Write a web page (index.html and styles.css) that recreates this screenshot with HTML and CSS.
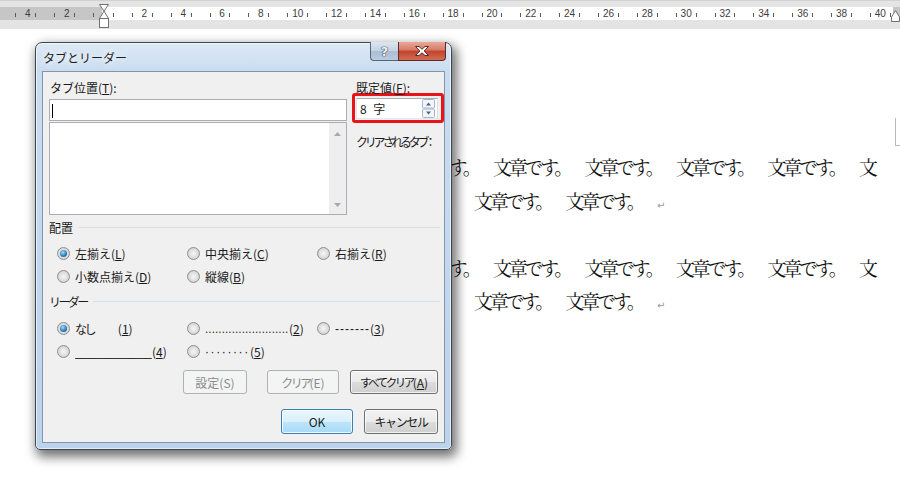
FILE: index.html
```html
<!DOCTYPE html>
<html lang="ja">

<head>
    <meta charset="UTF-8">
    <meta name="viewport" content="width=device-width, initial-scale=1.0">
    <title>タブとリーダー</title>
    <link rel="stylesheet" href="styles.css">
</head>

<body>

    <div class="ruler">
        <div class="ruler-band">
            <div class="scale">
                <div class="cell"><i></i><span class="d1">4</span><i></i></div>
                <div class="cell"><i></i><span class="d1">2</span><i></i></div>
                <div class="cell"><i></i><span></span><i></i></div>
                <div class="cell"><i></i><span class="d1">2</span><i></i></div>
                <div class="cell"><i></i><span class="d1">4</span><i></i></div>
                <div class="cell"><i></i><span class="d1">6</span><i></i></div>
                <div class="cell"><i></i><span class="d1">8</span><i></i></div>
                <div class="cell"><i></i><span>10</span><i></i></div>
                <div class="cell"><i></i><span>12</span><i></i></div>
                <div class="cell"><i></i><span>14</span><i></i></div>
                <div class="cell"><i></i><span>16</span><i></i></div>
                <div class="cell"><i></i><span>18</span><i></i></div>
                <div class="cell"><i></i><span>20</span><i></i></div>
                <div class="cell"><i></i><span>22</span><i></i></div>
                <div class="cell"><i></i><span>24</span><i></i></div>
                <div class="cell"><i></i><span>26</span><i></i></div>
                <div class="cell"><i></i><span>28</span><i></i></div>
                <div class="cell"><i></i><span>30</span><i></i></div>
                <div class="cell"><i></i><span>32</span><i></i></div>
                <div class="cell"><i></i><span>34</span><i></i></div>
                <div class="cell"><i></i><span>36</span><i></i></div>
                <div class="cell"><i></i><span>38</span><i></i></div>
                <div class="cell"><i></i><span>40</span><i></i></div>
            </div>
        </div>
        <!-- indent markers -->
        <svg class="indent-left" width="11" height="25" viewBox="0 0 11 25">
            <polygon points="0.5,0.5 9.5,0.5 5,7" fill="#fff" stroke="#707070" />
            <polygon points="5,7 9.5,14.5 0.5,14.5" fill="#fff" stroke="#707070" />
            <rect x="0.5" y="14.5" width="9" height="9" fill="#fff" stroke="#707070" />
        </svg>
        <svg class="indent-right" width="9" height="12" viewBox="0 0 9 12">
            <polygon points="4.5,0.5 8.5,7 8.5,11.5 0.5,11.5 0.5,7" fill="#fff" stroke="#707070" />
        </svg>
    </div>

    <div class="doc">
        <div class="line first">文章です<span class="kt">。</span>文章です<span class="kt">。</span>文章です<span class="kt">。</span>文章です<span class="kt">。</span>文章です<span class="kt">。</span>文章です<span class="kt">。</span>文章です<span class="kt">。</span>文章です<span class="kt">。</span>文</div>
        <div class="line">文章です<span class="kt">。</span>文章です<span class="kt">。</span>文章です<span class="kt">。</span>文章です<span class="kt">。</span>文章です<span class="kt">。</span>文章です<span class="kt">。</span><span class="pmark">↵</span></div>
        <div class="line"><span class="pmark">↵</span></div>
        <div class="line first">文章です<span class="kt">。</span>文章です<span class="kt">。</span>文章です<span class="kt">。</span>文章です<span class="kt">。</span>文章です<span class="kt">。</span>文章です<span class="kt">。</span>文章です<span class="kt">。</span>文章です<span class="kt">。</span>文</div>
        <div class="line">文章です<span class="kt">。</span>文章です<span class="kt">。</span>文章です<span class="kt">。</span>文章です<span class="kt">。</span>文章です<span class="kt">。</span>文章です<span class="kt">。</span><span class="pmark">↵</span></div>
        <div class="crop-mark"></div>
    </div>

    <div class="dialog">
        <div class="titlebar">
            <span class="title">タブとリーダー</span>
        </div>
        <div class="caption-buttons">
            <div class="cap help">?</div>
            <div class="cap close">
                <svg width="14" height="10" viewBox="0 0 14 10">
                    <polygon points="0.5,0.5 4,0.5 7,3.2 10,0.5 13.5,0.5 9.2,5 13.5,9.5 10,9.5 7,6.8 4,9.5 0.5,9.5 4.8,5" fill="#fff" stroke="#5a2a24" />
                </svg>
            </div>
        </div>

        <div class="client">
            <div class="top">
                <div class="col-left">
                    <div class="label">タブ位置(<u>T</u>):</div>
                    <div class="input"><span class="caret"></span></div>
                    <div class="listbox">
                        <div class="scroll">
                            <svg width="7" height="4" viewBox="0 0 7 4"><polygon points="0,4 7,4 3.5,0" fill="#a9a9a9" /></svg>
                            <svg width="7" height="4" viewBox="0 0 7 4"><polygon points="0,0 7,0 3.5,4" fill="#a9a9a9" /></svg>
                        </div>
                    </div>
                </div>
                <div class="col-right">
                    <div class="label">既定値(<u>F</u>):</div>
                    <div class="highlight">
                        <div class="spin">
                            <span class="spin-value">8 字</span>
                            <svg width="13" height="19" viewBox="0 0 13 19">
                                <rect x="0.5" y="0.5" width="12" height="8.5" rx="1" fill="#f2f5f9" stroke="#a7b4c6" />
                                <rect x="0.5" y="10" width="12" height="8.5" rx="1" fill="#f2f5f9" stroke="#a7b4c6" />
                                <polygon points="4,6.5 9,6.5 6.5,3.5" fill="#4c607f" />
                                <polygon points="4,12.5 9,12.5 6.5,15.5" fill="#4c607f" />
                            </svg>
                        </div>
                    </div>
                    <div class="label clear-label"><span class="squeeze">クリアされるタブ</span><span class="colon">：</span></div>
                </div>
            </div>

            <div class="group-head"><span>配置</span>
                <div class="rule"></div>
            </div>
            <div class="options">
                <div class="opt"><span class="radio checked"></span>左揃え(<u>L</u>)</div>
                <div class="opt"><span class="radio"></span>中央揃え(<u>C</u>)</div>
                <div class="opt"><span class="radio"></span>右揃え(<u>R</u>)</div>
                <div class="opt"><span class="radio"></span>小数点揃え(<u>D</u>)</div>
                <div class="opt"><span class="radio"></span>縦線(<u>B</u>)</div>
            </div>

            <div class="group-head"><span class="tight">リーダー</span>
                <div class="rule"></div>
            </div>
            <div class="options leaders">
                <div class="opt"><span class="radio checked"></span><span class="tight">なし</span><span class="num">(<u>1</u>)</span></div>
                <div class="opt"><span class="radio"></span><span class="fill dots">.........................</span>(<u>2</u>)</div>
                <div class="opt"><span class="radio"></span><span class="fill dashes">-------</span>(<u>3</u>)</div>
                <div class="opt"><span class="radio"></span><span class="fill under">____________</span>(<u>4</u>)</div>
                <div class="opt"><span class="radio"></span><span class="fill mids">········</span>(<u>5</u>)</div>
            </div>

            <div class="buttons row1">
                <div class="btn disabled set">設定(S)</div>
                <div class="btn disabled clr"><span class="tight">クリア</span>(E)</div>
                <div class="btn all"><span class="tighter">すべてクリア</span>(<u>A</u>)</div>
            </div>
            <div class="buttons row2">
                <div class="btn default ok">OK</div>
                <div class="btn cancel"><span class="kana">キャンセル</span></div>
            </div>
        </div>
    </div>

</body>

</html>
```

FILE: styles.css
```css
* {
    margin: 0;
    padding: 0;
}

body {
    width: 900px;
    height: 483px;
    overflow: hidden;
    position: relative;
    background: #fff;
    font-family: "Noto Sans CJK JP", "Liberation Sans", sans-serif;
}

/* ruler */

.ruler {
    height: 29px;
    box-sizing: border-box;
    padding-top: 6px;
    background: #e4e4e4;
    border-top: 1px solid #d2d2d2;
    position: relative;
}

.ruler-band {
    height: 13px;
    background: linear-gradient(to right, #c6c6c6 0 102px, #fff 102px 893px, #c6c6c6 893px);
}

.scale {
    display: flex;
    margin-left: 6.4px;
    height: 13px;
}

.cell {
    width: 38.85px;
    flex: none;
    box-sizing: border-box;
    padding: 0 9px;
    display: flex;
    justify-content: space-between;
    align-items: center;
    font-family: "Liberation Sans", sans-serif;
    font-size: 10px;
    color: #3c3c3c;
    line-height: 13px;
}

.cell i {
    width: 1px;
    height: 4px;
    background: #5a5a5a;
    margin-top: 2px;
}

.cell .d1 {
    padding-left: 4px;
}

.indent-left {
    position: absolute;
    left: 99px;
    top: 3px;
}

.indent-right {
    position: absolute;
    left: 891px;
    top: 9px;
}

/* document */

.doc {
    padding-top: 121px;
    font-family: "Noto Serif CJK JP", "IPAMincho", "Noto Sans CJK JP", serif;
    font-size: 19px;
    letter-spacing: -3.3px;
    line-height: 33.5px;
    color: #111;
    white-space: nowrap;
    position: relative;
}

.line {
    height: 33.5px;
    padding-left: 108px;
}

.line.first {
    padding-left: 127px;
}

.kt {
    margin-right: 14.5px;
}

.pmark {
    font-family: "DejaVu Sans", sans-serif;
    font-size: 10px;
    color: #9a9a9a;
    letter-spacing: 0;
    margin-left: 0;
}

.crop-mark {
    position: absolute;
    left: 895px;
    top: 89px;
    width: 6px;
    height: 27px;
    border-left: 1px solid #b8b8b8;
    border-bottom: 1px solid #b8b8b8;
}

/* dialog window */

.dialog {
    position: absolute;
    left: 35px;
    top: 42px;
    width: 417px;
    height: 408px;
    box-sizing: border-box;
    border: 1px solid #3d4753;
    border-radius: 7px 7px 5px 5px;
    padding: 0 6px 6px;
    background: linear-gradient(#dce9f6, #c9dcf0 30px, #bcd3ec);
    box-shadow: 3px 5px 11px 2px rgba(0, 0, 0, 0.55), inset 0 0 0 1px rgba(255, 255, 255, 0.6);
    display: flex;
    flex-direction: column;
    font-size: 12px;
    color: #1a1a1a;
}

.titlebar {
    height: 28px;
    display: flex;
    align-items: center;
    padding-left: 1px;
}

.title {
    font-size: 12px;
    color: #1e1e1e;
    text-shadow: 0 0 6px #fff, 0 0 10px #fff;
}

.caption-buttons {
    position: absolute;
    right: 5px;
    top: -1px;
    display: flex;
}

.cap {
    height: 19px;
    box-sizing: border-box;
    border: 1px solid #56657a;
    border-top: none;
    display: flex;
    justify-content: center;
    align-items: center;
}

.help {
    width: 28px;
    border-radius: 0 0 0 4px;
    border-right: none;
    background: linear-gradient(#dde6f1, #c3d1e2 50%, #aabdd3 50%, #bccbde);
    font-family: "DejaVu Sans", sans-serif;
    font-weight: bold;
    font-size: 13px;
    color: #eef1f5;
    text-shadow: 0 0 1px #37475c, 0 0 1px #37475c, 0 0 1px #37475c;
}

.close {
    width: 48px;
    border-color: #5b2c25;
    border-radius: 0 0 4px 0;
    background: linear-gradient(#eaa898, #d67a66 45%, #c2432c 50%, #d26c55);
}

.client {
    flex: 1;
    background: #f0f0f0;
    border: 1px solid #8496ac;
}

.kana {
    letter-spacing: -1.4px;
}

.squeeze {
    letter-spacing: -3.2px;
}

.colon {
    margin-left: -2px;
}

.tight {
    letter-spacing: -2.6px;
}

.tighter {
    font-size: 11.5px;
    letter-spacing: -2.5px;
}

.top {
    display: grid;
    grid-template-columns: 298px 92px;
    column-gap: 5px;
    margin-left: 6px;
    padding-top: 9px;
}

.label {
    line-height: 14px;
    height: 14px;
    padding-left: 1px;
    white-space: nowrap;
}

.input {
    margin-top: 4px;
    height: 22px;
    box-sizing: border-box;
    border: 1px solid #abadb3;
    background: #fff;
    padding: 4px 0 0 2px;
}

.caret {
    display: block;
    width: 1px;
    height: 14px;
    background: #000;
}

.listbox {
    margin-top: 1px;
    height: 93px;
    box-sizing: border-box;
    border: 1px solid #abadb3;
    background: #fff;
    display: flex;
    justify-content: flex-end;
}

.scroll {
    width: 17px;
    background: #eeeeee;
    display: flex;
    flex-direction: column;
    justify-content: space-between;
    align-items: center;
    padding: 9px 0 7px;
}

.col-right .label {
    padding-left: 4px;
}

.highlight {
    margin-top: -2px;
    height: 30px;
    box-sizing: border-box;
    border: 3px solid #e8141b;
    border-radius: 3px;
    padding: 2px 3px 1px 1px;
}

.spin {
    height: 21px;
    box-sizing: border-box;
    border: 1px solid #abadb3;
    border-color: #abadb3 #dbdfe6 #e3e9ef #e2e3ea;
    background: #fff;
    display: flex;
    align-items: center;
    justify-content: space-between;
    padding: 0 2px 0 3px;
}

.spin-value {
    word-spacing: 4px;
}

.clear-label {
    margin-top: 12px;
}

.group-head {
    display: flex;
    align-items: center;
    margin-top: 6px;
    padding-left: 6px;
    padding-right: 4px;
    line-height: 14px;
    height: 14px;
}

.group-head .rule {
    flex: 1;
    height: 1px;
    background: #d5dfe5;
    margin-left: 6px;
    margin-top: -1px;
}

.options + .group-head {
    margin-top: 7px;
}

.options {
    display: grid;
    grid-template-columns: 130px 130px 130px;
    grid-auto-rows: 23px;
    padding-left: 14px;
    margin-top: 7px;
}

.options.leaders {
    margin-top: 8px;
}

.opt {
    display: flex;
    align-items: center;
    white-space: nowrap;
}

.radio {
    width: 13px;
    height: 13px;
    box-sizing: border-box;
    border-radius: 50%;
    border: 1px solid #8e8f8f;
    background: radial-gradient(circle, #f6f6f6 0, #e2e2e2 45%, #cfcfcf 80%, #ececec 100%);
    margin-right: 5px;
    position: relative;
    flex: none;
}

.radio.checked::after {
    content: "";
    position: absolute;
    left: 2px;
    top: 2px;
    width: 7px;
    height: 7px;
    border-radius: 50%;
    background: radial-gradient(circle at 40% 35%, #a9dcfa 0, #2c7fc0 55%, #134a7d 100%);
}

.num {
    margin-left: 24px;
}

.fill {
    display: inline-block;
    overflow: hidden;
    white-space: nowrap;
    font-family: "Liberation Sans", sans-serif;
    line-height: 14px;
}

.dots {
    width: 84px;
    color: #3d3020;
}

.dashes {
    width: 35px;
    letter-spacing: 1px;
}

.under {
    width: 77px;
    letter-spacing: -0.3px;
}

.mids {
    width: 45px;
    letter-spacing: 1.6px;
}

.buttons {
    display: flex;
    justify-content: flex-end;
    padding-right: 6px;
}

.row1 {
    margin-top: 7px;
}

.row2 {
    margin-top: 15px;
}

.btn {
    height: 24px;
    box-sizing: border-box;
    border: 1px solid #707070;
    border-radius: 3px;
    background: linear-gradient(#f2f2f2 0, #ebebeb 50%, #dddddd 50%, #cfcfcf 100%);
    box-shadow: inset 0 0 0 1px rgba(255, 255, 255, 0.7);
    display: flex;
    justify-content: center;
    align-items: center;
    white-space: nowrap;
}

.btn.disabled {
    border-color: #adb2b5;
    background: #f4f4f4;
    color: #8a8a8a;
    box-shadow: none;
}

.set {
    width: 64px;
    margin-right: 20px;
}

.clr {
    width: 72px;
    margin-right: 11px;
}

.all {
    width: 88px;
}

.row2 .btn {
    height: 25px;
}

.ok {
    width: 72px;
    margin-right: 11px;
}

.btn.default {
    border-color: #3c7fb1;
    background: linear-gradient(#eaf6fd 0, #d9f0fc 50%, #bee6fd 50%, #a7d9f5 100%);
    box-shadow: inset 0 0 0 1px rgba(255, 255, 255, 0.8);
}

.cancel {
    width: 74px;
}
```
